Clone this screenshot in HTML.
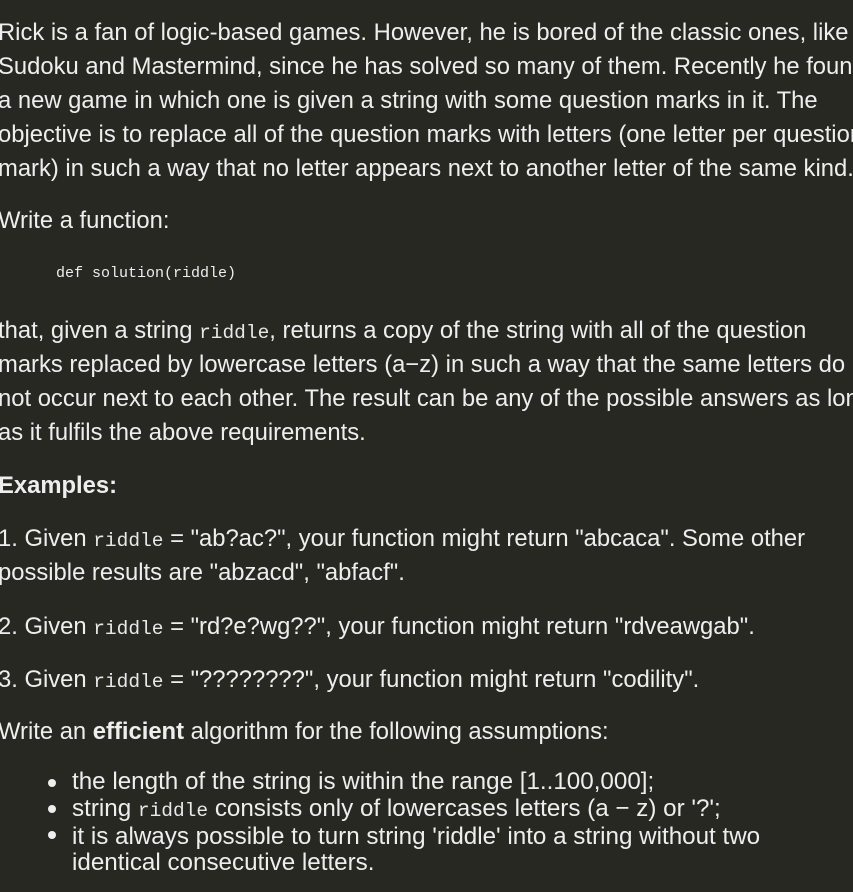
<!DOCTYPE html>
<html><head><style>
html,body{margin:0;padding:0;background:#272822;width:853px;height:892px;overflow:hidden}
body{position:relative;font-family:"Liberation Sans",Arial,sans-serif;color:#eeeeee;font-size:23.8px}
.l{position:absolute;left:-2px;white-space:nowrap;line-height:34px;height:34px}
code{font-family:"Liberation Mono",monospace;font-size:19.5px;color:#e8e8e8}
.c{font-family:"Liberation Mono",monospace;font-size:15px;left:56px}
.b{left:72px;line-height:26px;height:26px;font-size:24.2px}
.d{position:absolute;left:48px;width:8px;height:8px;border-radius:50%;background:#eee}
</style></head><body>
<div class="l" style="top:16px">Rick is a fan of logic-based games. However, he is bored of the classic ones, like</div>
<div class="l" style="top:50px">Sudoku and Mastermind, since he has solved so many of them. Recently he found</div>
<div class="l" style="top:84px">a new game in which one is given a string with some question marks in it. The</div>
<div class="l" style="top:118px">objective is to replace all of the question marks with letters (one letter per question</div>
<div class="l" style="top:152px">mark) in such a way that no letter appears next to another letter of the same kind.</div>
<div class="l" style="top:204px">Write a function:</div>
<div class="l c" style="top:257px">def solution(riddle)</div>
<div class="l" style="top:314px">that, given a string <code>riddle</code>, returns a copy of the string with all of the question</div>
<div class="l" style="top:348px">marks replaced by lowercase letters (a−z) in such a way that the same letters do</div>
<div class="l" style="top:382px">not occur next to each other. The result can be any of the possible answers as long</div>
<div class="l" style="top:416px">as it fulfils the above requirements.</div>
<div class="l" style="top:469px;font-weight:bold">Examples:</div>
<div class="l" style="top:522px">1. Given <code>riddle</code> = "ab?ac?", your function might return "abcaca". Some other</div>
<div class="l" style="top:556px">possible results are "abzacd", "abfacf".</div>
<div class="l" style="top:610px">2. Given <code>riddle</code> = "rd?e?wg??", your function might return "rdveawgab".</div>
<div class="l" style="top:663px">3. Given <code>riddle</code> = "????????", your function might return "codility".</div>
<div class="l" style="top:715px">Write an <b>efficient</b> algorithm for the following assumptions:</div>
<div class="d" style="top:779px"></div>
<div class="l b" style="top:769px">the length of the string is within the range [1..100,000];</div>
<div class="d" style="top:805px"></div>
<div class="l b" style="top:796px">string <code>riddle</code> consists only of lowercases letters (a − z) or '?';</div>
<div class="d" style="top:831px"></div>
<div class="l b" style="top:824px">it is always possible to turn string 'riddle' into a string without two</div>
<div class="l b" style="top:850px">identical consecutive letters.</div>
</body></html>
